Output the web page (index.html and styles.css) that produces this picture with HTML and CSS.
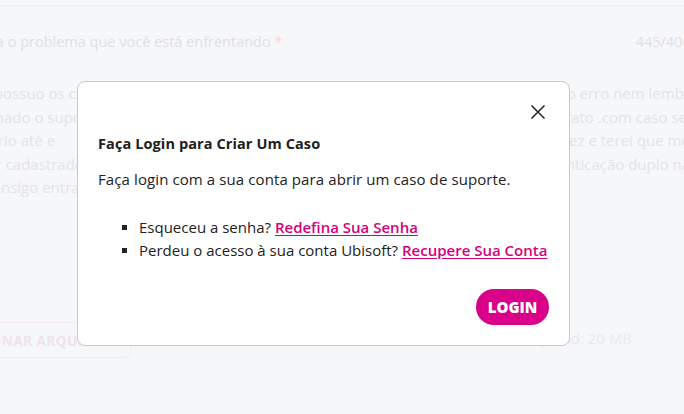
FILE: index.html
```html
<!DOCTYPE html>
<html lang="pt-BR">
<head>
<meta charset="utf-8">
<title>Criar um caso</title>
<link rel="stylesheet" href="styles.css">
</head>
<body>
<div class="page">
  <div class="tabs-edge"></div>
  <div class="form">
    <div class="label-row">
      <span class="label">Descreva o problema que você está enfrentando <span class="req">*</span></span>
      <span class="count">445/4000</span>
    </div>
    <div class="textarea">
      <div class="line"><span>Eu não possuo os códigos de backup</span><span>e não me lembro do erro nem lembro</span></div>
      <div class="line"><span>Foi acionado o suporte</span><span>me pediram um contato .com caso seja</span></div>
      <div class="line"><span>necessário até e</span><span>disseram que eu talvez e terei que meu</span></div>
      <div class="line"><span>o celular cadastrado</span><span>e o código de autenticação duplo não</span></div>
      <div class="line"><span>e não consigo entrar no</span><span></span></div>
    </div>
    <div class="upload-row">
      <span class="upload-btn">ADICIONAR ARQUIVOS</span>
      <span class="upload-note">Tamanho máximo de upload: 20 MB</span>
    </div>
  </div>
</div>

<div class="modal" role="dialog" aria-labelledby="mt">
  <div class="modal-top">
    <button class="close" aria-label="Fechar">
      <svg width="16" height="16" viewBox="0 0 16 16"><path d="M1.5 1.5 L14.5 14.5 M14.5 1.5 L1.5 14.5" stroke="#2b2b2b" stroke-width="1.6" fill="none"/></svg>
    </button>
  </div>
  <h2 class="modal-title" id="mt">Faça Login para Criar Um Caso</h2>
  <p class="modal-text">Faça login com a sua conta para abrir um caso de suporte.</p>
  <ul class="modal-list">
    <li>Esqueceu a senha? <a href="#">Redefina Sua Senha</a></li>
    <li>Perdeu o acesso à sua conta Ubisoft? <a href="#">Recupere Sua Conta</a></li>
  </ul>
  <div class="modal-actions">
    <button class="login">LOGIN</button>
  </div>
</div>
</body>
</html>
```
FILE: styles.css
```css
html, body {
  margin: 0;
  padding: 0;
  background: #f6f7f9;
  overflow: hidden;
}
body {
  width: 684px;
  height: 414px;
  font-family: "Open Sans", "Lato", sans-serif;
  color: #e2e3e6;
}
.page {
  width: 684px;
  height: 414px;
  overflow: hidden;
}
.tabs-edge {
  height: 5px;
  border-bottom: 1px solid #eeeff2;
}
.form {
  margin-left: -58px;
  width: 757px;
}
.label-row {
  display: flex;
  justify-content: space-between;
  padding-top: 26px;
  height: 32px;
  font-size: 14.5px;
  color: #dfe0e3;
}
.label .req { color: #f1d8d8; }
.textarea {
  margin-top: 10px;
  height: 132px;
  padding-top: 8px;
  font-size: 15px;
  line-height: 23.5px;
  color: #e3e4e7;
}
.line {
  display: flex;
  justify-content: space-between;
  white-space: nowrap;
}
.upload-row {
  display: flex;
  align-items: center;
  margin-top: 108px;
  gap: 20px;
}
.upload-btn {
  display: inline-flex;
  align-items: center;
  height: 34px;
  padding: 0 20px;
  margin-left: -12px;
  border: 1px solid #f3e9ef;
  border-radius: 8px;
  font-size: 14px;
  font-weight: 700;
  letter-spacing: 0.2px;
  color: #f0e3ea;
}
.upload-note {
  margin-left: auto;
  margin-right: 67px;
  margin-bottom: 4px;
  font-size: 15px;
  color: #e9eaed;
}

/* modal */
.modal {
  position: absolute;
  left: 77px;
  top: 81px;
  width: 451px;
  height: 243px;
  padding: 10px 20px 10px 20px;
  background: #fff;
  border: 1px solid #c9c9cb;
  border-radius: 8px;
  color: #222;
  font-family: "Open Sans", sans-serif;
}
.modal-top {
  display: flex;
  justify-content: flex-end;
  height: 40px;
}
.close {
  margin-top: 11px;
  margin-right: 2px;
  width: 18px;
  height: 18px;
  padding: 0;
  border: 0;
  background: none;
  display: flex;
  align-items: center;
  justify-content: center;
}
.modal-title {
  margin: 2px 0 0 0;
  font-size: 14.5px;
  font-weight: 700;
  line-height: 20px;
  letter-spacing: 0.1px;
  color: #202020;
}
.modal-text {
  margin: 15px 0 0 0;
  font-size: 15px;
  line-height: 20px;
  letter-spacing: 0.1px;
}
.modal-list {
  margin: 27px 0 0 0;
  padding-left: 24px;
  list-style: none;
  font-size: 15px;
  line-height: 23px;
  letter-spacing: 0;
}
.modal-list li {
  white-space: nowrap;
}
.modal-list li::before {
  content: "";
  display: inline-block;
  vertical-align: middle;
  width: 5px;
  height: 5px;
  margin: -2px 12px 0 0;
  background: #222;
}
.modal-list a {
  color: #d4017f;
  font-weight: 600;
  text-decoration: underline;
  text-underline-offset: 2px;
}
.modal-actions {
  display: flex;
  justify-content: flex-end;
  margin-top: 27px;
}
.login {
  width: 73px;
  height: 36px;
  border: 0;
  border-radius: 18px;
  background: #d9008a;
  color: #fff;
  font-family: "Open Sans", sans-serif;
  font-size: 15px;
  font-weight: 800;
  letter-spacing: 0;
  padding: 0;
}
```
